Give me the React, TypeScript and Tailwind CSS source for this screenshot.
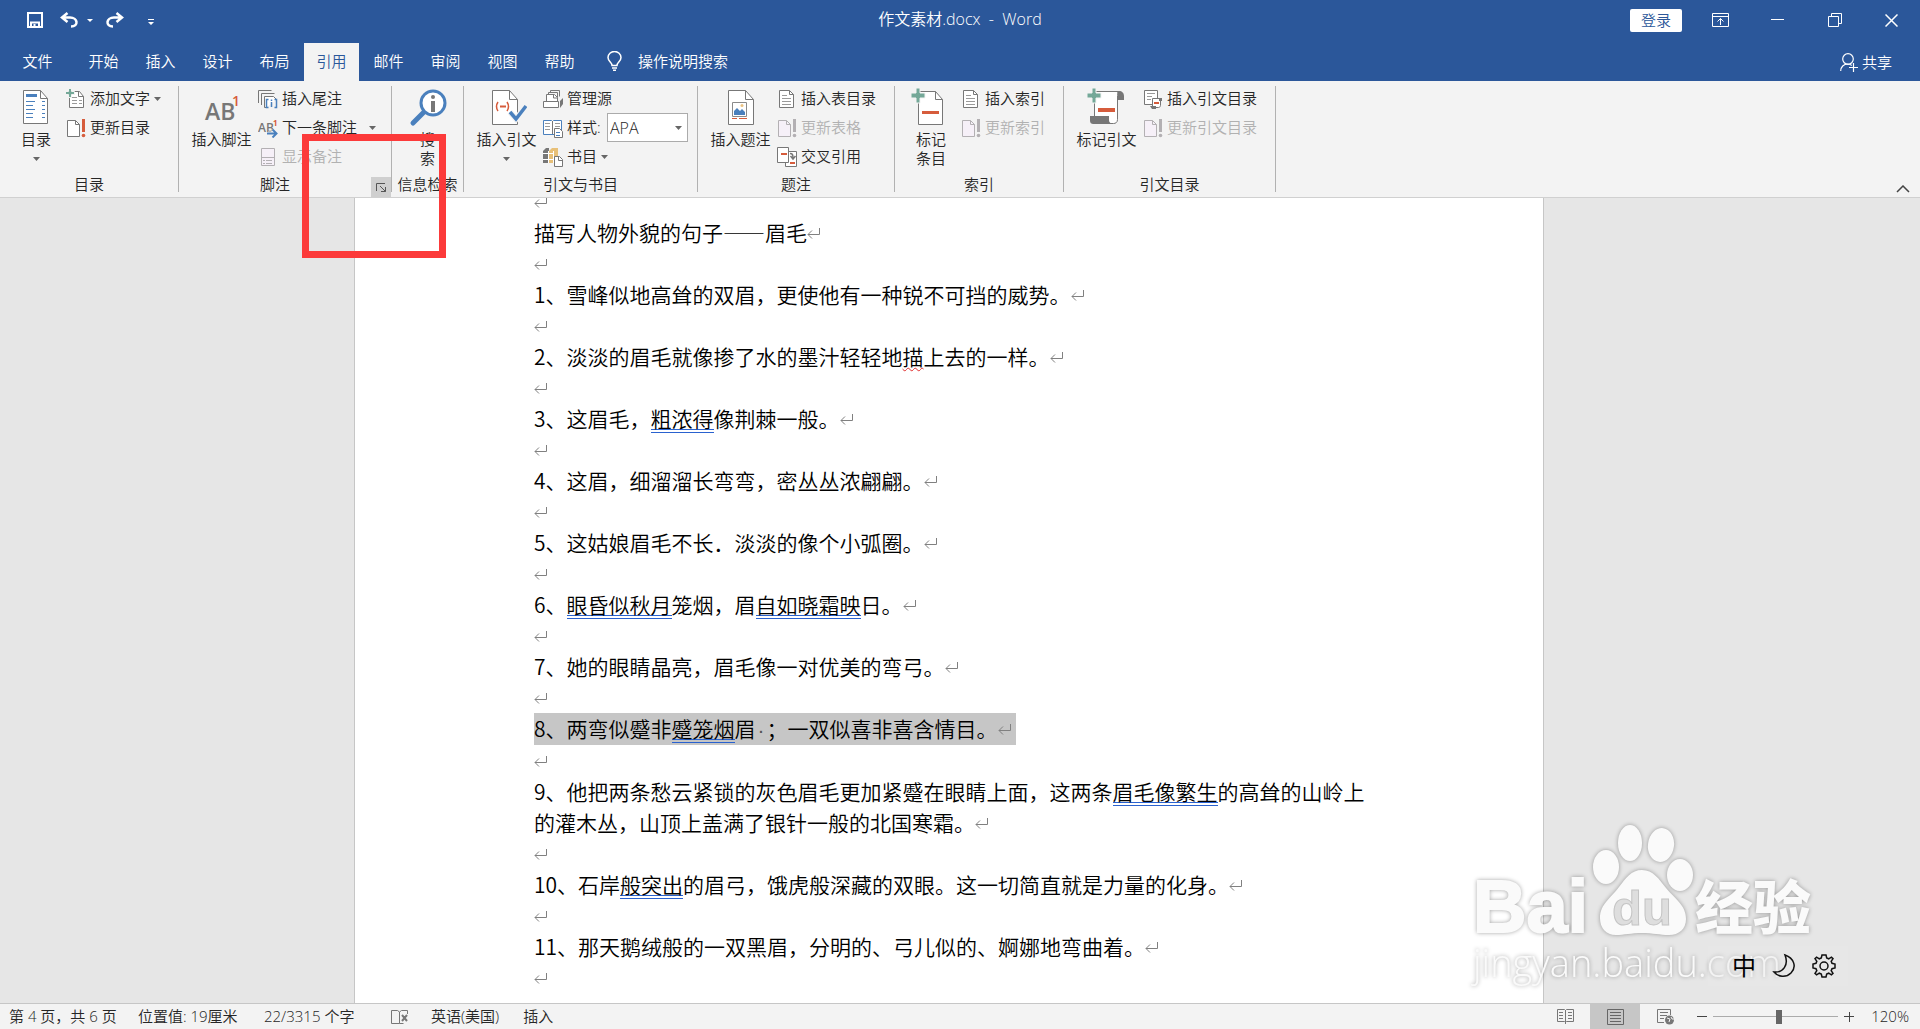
import type { ReactNode } from "react";

const GREY = "#777777";
const BLUE = "#4a80bd";
const ORANGE = "#d65c3c";
const TEAL = "#74a898";

/* ---------- icons ---------- */

function Big({ children }: { children: ReactNode }) {
  return (
    <svg width="40" height="40" viewBox="0 0 40 40" fill="none" className="mb-0.5 shrink-0">
      {children}
    </svg>
  );
}

function Small({ children }: { children: ReactNode }) {
  return (
    <svg width="20" height="20" viewBox="0 0 20 20" fill="none" className="shrink-0">
      {children}
    </svg>
  );
}

function Caret() {
  return (
    <svg width="7" height="4" viewBox="0 0 7 4" className="shrink-0">
      <path d="M0 0h7L3.500 4z" fill="#666" />
    </svg>
  );
}

function TocIcon() {
  return (
    <Big>
      <path d="M7.500 2.500h17l7 8v25h-24z" fill="#fff" stroke={GREY} />
      <path d="M24.500 2.500v8h7" stroke={GREY} />
      <path d="M10 6h11v3H10z" fill={BLUE} />
      <path d="M10 13.500h9M10 17.500h7M10 21.500h9M10 25.500h7M10 29.500h7M26 13.500h3M26 17.500h3M26 21.500h3M26 25.500h3M26 29.500h3" stroke={BLUE} />
    </Big>
  );
}

function FootnoteIcon() {
  return (
    <Big>
      <text x="3" y="32" fontSize="23" fontWeight="600" fontFamily="Open Sans, sans-serif" fill={GREY}>AB</text>
      <text x="30" y="18" fontSize="14" fontWeight="600" fontFamily="Open Sans, sans-serif" fill={ORANGE}>1</text>
    </Big>
  );
}

function SearchIcon() {
  return (
    <Big>
      <path d="M17 23 5 35" stroke={BLUE} strokeWidth="5" strokeLinecap="round" />
      <circle cx="25" cy="15" r="12" fill="#fff" stroke={BLUE} strokeWidth="3" />
      <circle cx="25" cy="9" r="2" fill={GREY} />
      <path d="M23 13h4v11h-4z" fill={GREY} />
    </Big>
  );
}

function CitationIcon() {
  return (
    <Big>
      <path d="M5.500 2.500h17l8 9v25h-25z" fill="#fff" stroke={GREY} />
      <path d="M22.500 2.500v9h8" stroke={GREY} />
      <path d="M11 14c-2 3-2 6 0 9M20 14c2 3 2 6 0 9" stroke={ORANGE} strokeWidth="1.500" />
      <path d="M13 18.500h6" stroke={ORANGE} strokeWidth="2" />
      <path d="m23 24 6 7 10-13" stroke="#f3f3f3" strokeWidth="6" />
      <path d="m23 24 6 7 10-13" stroke={BLUE} strokeWidth="3.500" />
    </Big>
  );
}

function CaptionIcon() {
  return (
    <Big>
      <path d="M7.500 2.500h17l8 9v25h-25z" fill="#fff" stroke={GREY} />
      <path d="M24.500 2.500v9h8" stroke={GREY} />
      <path d="M11.500 14.500h14v14h-14z" stroke="#8a8a8a" />
      <path d="M13 27v-4l3-3 3 3 2-2 3 3v3z" fill={BLUE} />
      <circle cx="21" cy="17.500" r="1.500" fill="#eac282" />
      <path d="M11 30.500h5M18 30.500h8" stroke={ORANGE} />
    </Big>
  );
}

function MarkEntryIcon() {
  return (
    <Big>
      <path d="M7.500 3.500h17l7 8v25h-24z" fill="#fff" stroke={GREY} />
      <path d="M24.500 3.500v8h7" stroke={GREY} />
      <path d="M11 23h17v3H11z" fill={ORANGE} />
      <path d="M5 0h4v5h5v5H9v5H5v-5H0V5h5z" fill={TEAL} stroke="#f3f3f3" />
    </Big>
  );
}

function MarkCitationIcon() {
  return (
    <Big>
      <path d="M7.500 3.500h25c-1.500 1-2 2-2 4v24c0 3-2 4-4 4h-15l-4-4z" fill="#fff" stroke={GREY} />
      <path d="M31 3h1c3 0 5 2 5 5v4h-6V8c0-2 0-3-1.500-4.500z" fill={GREY} />
      <path d="M3 28h19v4c0 2 1 3.500 4 4H7c-3 0-4-1-4-4z" fill={GREY} />
      <path d="M11 20h17v4H11z" fill={ORANGE} />
      <path d="M5 0h4v5h5v5H9v5H5v-5H0V5h5z" fill={TEAL} stroke="#f3f3f3" />
    </Big>
  );
}

function AddTextIcon() {
  return (
    <Small>
      <path d="M3.500 2.500h10l4 5v11h-14z" fill="#fff" stroke={GREY} />
      <path d="M12.500 2.500v5h5" stroke={GREY} />
      <path d="M6 8.500h5M6 11.500h5M6 14.500h5M13 11.500h3M13 14.500h3" stroke="#9a9a9a" />
      <path d="M2.500-.5h3v3h3v3h-3v3h-3v-3h-3v-3h3z" fill={TEAL} stroke="#f3f3f3" />
    </Small>
  );
}

function UpdateIcon({ disabled }: { disabled?: boolean }) {
  const line = disabled ? "#b3b0b3" : GREY;
  const mark = disabled ? "#b3b0b3" : ORANGE;
  return (
    <Small>
      <path d="M1.500 2.500h8l4 4v12h-12z" fill={disabled ? "#f6f0f8" : "#fff"} stroke={line} />
      <path d="M9.500 2.500v4h4" stroke={line} />
      <path d="M16 1h3v13h-3z" fill={mark} />
      <circle cx="17.500" cy="17.500" r="1.800" fill={mark} />
    </Small>
  );
}

function EndnoteIcon() {
  return (
    <Small>
      <path d="M.5 14V1.500h13M3.500 16V4.500h13" stroke={GREY} />
      <path d="M8 18.500H6.500v-11h9l3 3" fill="#fff" stroke={GREY} />
      <path d="M10.500 10.500h-2v8h2M16.500 10.500h2v8h-2" stroke={BLUE} strokeWidth="1.500" />
      <path d="M13.500 13v5M13.500 10.500v1.500" stroke={BLUE} strokeWidth="1.500" />
    </Small>
  );
}

function NextFootnoteIcon() {
  return (
    <Small>
      <text x="0" y="14" fontSize="12" fontWeight="600" fontFamily="Open Sans, sans-serif" fill={GREY}>AB</text>
      <text x="15" y="8" fontSize="8" fontWeight="700" fontFamily="Open Sans, sans-serif" fill={ORANGE}>1</text>
      <path d="M10 15.500h8M14.500 11.500l4 4-4 4" stroke="#f3f3f3" strokeWidth="4" />
      <path d="M9 15.500h9M14.500 11.500l4 4-4 4" stroke={BLUE} strokeWidth="2" />
    </Small>
  );
}

function ShowNotesIcon() {
  return (
    <Small>
      <path d="M3.500 1.500h13v17h-13zM3.500 10.500h13" fill="#f6f0f8" stroke="#b3b0b3" />
      <path d="M5 13.500h2M8 13.500h6M5 16.500h2M8 16.500h6" stroke="#b3b0b3" />
    </Small>
  );
}

function SourcesIcon() {
  return (
    <Small>
      <path d="M5.500 5V3.500h9v5M7.500 3V1.500h9v6" stroke={GREY} />
      <path d="M3.500 12V5.500h8l3 3v4" fill="#fff" stroke={GREY} />
      <path d="M10.500 6v3h4" stroke={GREY} />
      <path d="M.5 12.500h15v6H.5z" fill="#fff" stroke={GREY} />
      <path d="m17 12 3-3v6l-3 4z" fill={GREY} />
    </Small>
  );
}

function StyleIcon() {
  return (
    <Small>
      <path d="M.5 2.500h8l1 1 1-1h8v14H.5z" fill="#fff" stroke={BLUE} />
      <path d="M9.500 3v13" stroke={GREY} />
      <path d="M2 5.500h5M2 8.500h5M2 11.500h5M12 5.500h5M12 8.500h5" stroke="#9a9a9a" />
      <path d="M11.500 10.500h5l3 3v6h-8z" fill="#fff" stroke={GREY} />
      <path d="M13 14.500h4M13 17.500h4" stroke={BLUE} />
    </Small>
  );
}

function BibliographyIcon() {
  return (
    <Small>
      <path d="m0 4 3-3h3v12l-1 3H0z" fill={GREY} />
      <path d="m6 4 3-3h6v12l-2 3H6z" fill="#e8c078" />
      <path d="M0 6.500h5M0 12.500h5M6 6.500h5M6 12.500h5M5.500 4v12M10.500 4v12" stroke="#fff" />
      <path d="M11.500 9.500h5l3 3v7h-8z" fill="#fff" stroke={GREY} />
      <path d="M15.500 9.500v4h4" stroke={GREY} />
    </Small>
  );
}

function PageIcon() {
  return (
    <Small>
      <path d="M2.500 1.500h10l4 4v13h-14z" fill="#fff" stroke={GREY} />
      <path d="M12.500 1.500v4h4" stroke={GREY} />
      <path d="M5 6.500h5M5 9.500h9M5 12.500h9M5 15.500h9" stroke="#9a9a9a" />
    </Small>
  );
}

function CrossRefIcon() {
  return (
    <Small>
      <path d="M8.500 4.500h11v15h-11z" fill="#fff" stroke={GREY} />
      <path d="M.5.5h11v15H.5z" fill="#fff" stroke={GREY} />
      <path d="M4 7h6M13 16h5" stroke={ORANGE} strokeWidth="2" />
      <path d="M13 6.500c2.500 0 3 1 3 5M13.500 9l2.500 3 2.500-3" stroke={GREY} strokeWidth="1.500" />
    </Small>
  );
}

function AuthoritiesIcon() {
  return (
    <Small>
      <path d="M1.500 1.500h13v14h-13z" fill="#fff" stroke={GREY} />
      <path d="M4 4.500h8M4 7.500h5M4 10.500h4" stroke="#9a9a9a" />
      <path d="M9.500 9.500h8v7c0 1-1 2-2 2h-6z" fill="#fff" stroke={GREY} />
      <path d="M16 9h3v3h-3zM7 17h6v3H9z" fill={GREY} />
      <path d="M11 13h5v2h-5z" fill={ORANGE} />
    </Small>
  );
}

/* ---------- ribbon parts ---------- */

function Group({ label, className, launcher, children }: { label: string; className: string; launcher?: boolean; children: ReactNode }) {
  return (
    <section aria-label={label} className={`flex shrink-0 ${className}`}>
      <div className="flex min-w-0 flex-1 flex-col pt-[3px]">
        <div className="flex h-[87px]">{children}</div>
        <div className="flex flex-1 items-center">
          <span className="flex-1 text-center">{label}</span>
          {launcher && (
            <button aria-label="脚注和尾注" className="flex h-5 w-5 items-center justify-center self-end bg-[#cfcfcf]">
              <svg width="11" height="11" viewBox="0 0 11 11" fill="none" stroke="#555">
                <path d="M.5 9V1.500H9M4 4l5.500 5.500M9.500 5v4.500H5" />
              </svg>
            </button>
          )}
        </div>
      </div>
      <div className="my-[5px] w-px bg-[#b1b1b1]" />
    </section>
  );
}

function BigButton({ icon, lines, className, caret }: { icon: ReactNode; lines: string[]; className: string; caret?: boolean }) {
  return (
    <button className={`flex flex-col items-center pt-1 leading-[19px] whitespace-nowrap ${className}`}>
      {icon}
      {lines.map((line) => (
        <span key={line}>{line}</span>
      ))}
      {caret && (
        <span className="flex h-[19px] items-center">
          <Caret />
        </span>
      )}
    </button>
  );
}

function SmallButton({ icon, label, disabled, caret, wide }: { icon: ReactNode; label: string; disabled?: boolean; caret?: boolean; wide?: boolean }) {
  return (
    <button disabled={disabled} className="flex h-[29px] items-center gap-1 whitespace-nowrap disabled:text-[#b1b1b1]">
      {icon}
      <span className="pb-0.5">{label}</span>
      {caret && (
        <span className={wide ? "pl-2" : ""}>
          <Caret />
        </span>
      )}
    </button>
  );
}

/* ---------- document parts ---------- */

function Mark() {
  return (
    <svg width="18" height="14" viewBox="0 0 18 14" fill="none" stroke="#808080" className="inline-block align-baseline">
      <path d="M12.500 1v6.500H1M5 3.500l-4 4 4 4" />
    </svg>
  );
}

function Grammar({ children }: { children: ReactNode }) {
  return <span className="inline-block border-b-4 border-double border-[#2a62cf] leading-none">{children}</span>;
}

function Spelling({ children }: { children: ReactNode }) {
  return <span className="underline decoration-[#e03030] decoration-wavy decoration-1 underline-offset-2">{children}</span>;
}

const paragraphs: ReactNode[] = [
  "描写人物外貌的句子——眉毛",
  "1、雪峰似地高耸的双眉，更使他有一种锐不可挡的威势。",
  <>2、淡淡的眉毛就像掺了水的墨汁轻轻地<Spelling>描</Spelling>上去的一样。</>,
  <>3、这眉毛，<Grammar>粗浓得</Grammar>像荆棘一般。</>,
  "4、这眉，细溜溜长弯弯，密丛丛浓翩翩。",
  "5、这姑娘眉毛不长．淡淡的像个小弧圈。",
  <>6、<Grammar>眼昏似秋月</Grammar>笼烟，眉<Grammar>自如晓霜映</Grammar>日。</>,
  "7、她的眼睛晶亮，眉毛像一对优美的弯弓。",
  <mark className="inline-block bg-[#c6c6c6] text-black">
    8、两弯似蹙非<Grammar>蹙笼烟</Grammar>眉<span className="px-0.5 font-['Liberation_Sans'] text-[#555]">·</span>；一双似喜非喜含情目。<Mark />
  </mark>,
  <>9、他把两条愁云紧锁的灰色眉毛更加紧蹙在眼睛上面，这两条<Grammar>眉毛像繁生</Grammar>的高耸的山岭上的灌木丛，山顶上盖满了银针一般的北国寒霜。</>,
  <>10、石岸<Grammar>般突出</Grammar>的眉弓，饿虎般深藏的双眼。这一切简直就是力量的化身。</>,
  "11、那天鹅绒般的一双黑眉，分明的、弓儿似的、婀娜地弯曲着。",
];

const SELECTED = 8;

function Watermark() {
  return (
    <svg
      aria-hidden="true"
      width="390"
      height="180"
      viewBox="0 0 390 180"
      className="pointer-events-none absolute right-[69px] bottom-[34px] drop-shadow-[0_0_2px_rgba(0,0,0,0.35)]"
    >
      <g fill="#fafafa">
        <ellipse cx="145" cy="52" rx="13" ry="17" />
        <ellipse cx="169" cy="28" rx="12" ry="18" />
        <ellipse cx="200" cy="30" rx="13" ry="17" transform="rotate(8 200 30)" />
        <ellipse cx="219" cy="60" rx="13" ry="16" />
        <path d="M181 55c11 0 17 9 24 18 9 11 20 17 20 31 0 10-7 16-17 16-9 0-16-2-27-2s-18 2-26 2c-10 0-16-7-16-17 0-14 11-20 19-31 7-9 12-17 23-17z" />
        <text x="12" y="117" fontSize="74" fontWeight="700" fontFamily="Liberation Sans, sans-serif" stroke="#fafafa" strokeWidth="2">Bai</text>
        <text x="234" y="114" fontSize="58" fontWeight="900" fontFamily="Noto Sans CJK SC, sans-serif">经验</text>
        <text x="12" y="162" fontSize="38" fontFamily="Open Sans, sans-serif">jingyan.baidu.com</text>
      </g>
      <text x="151" y="110" fontSize="49" fontWeight="700" fontFamily="Liberation Sans, sans-serif" fill="#dedede" stroke="#c4c4c4">du</text>
    </svg>
  );
}

function ImeBar() {
  return (
    <div className="absolute right-[72px] bottom-[43px] flex h-10 w-[140px] items-center justify-end gap-4 bg-[#e9e9e9]/40 pr-3 text-black">
      <span className="text-2xl leading-none font-normal">中</span>
      <svg width="24" height="26" viewBox="0 0 24 26" fill="none" stroke="#111" strokeWidth="1.500">
        <path d="M13 2c9 3 12 12 6 18-5 5-13 4-17-1 9 1 15-7 11-17z" />
      </svg>
      <svg width="24" height="26" viewBox="-12 -13 24 26" fill="none" stroke="#111" strokeWidth="1.500">
        <circle r="4" />
        <path d="M-2-11h4l.7 3 2 .8L7.400-8.900 9-7.300 7.200-4.700l.8 2 3 .7v4l-3 .7-.8 2L9 7.300 7.400 8.900 4.700 7.200l-2 .8-.7 3h-4l-.7-3-2-.8-2.700 1.700L-9 7.300l1.800-2.600-.8-2-3-.7v-4l3-.7.8-2L-9-7.300l1.600-1.600 2.700 1.700 2-.8z" />
      </svg>
    </div>
  );
}

const tabs = ["开始", "插入", "设计", "布局", "引用", "邮件", "审阅", "视图", "帮助"];

export default function App() {
  return (
    <div lang="zh-CN" className="relative flex h-screen flex-col overflow-hidden bg-[#e6e6e6] font-['Open_Sans','Noto_Sans_CJK_SC',sans-serif] text-[15px] leading-5 font-[350] text-[#262626]">
      <header className="bg-[#2b579a] text-white">
        <div className="flex h-[43px] items-start">
          <div className="flex h-10 flex-1 items-center">
            <button aria-label="保存" className="mr-[17px] ml-[27px]">
              <svg width="16" height="16" viewBox="0 0 16 16" fill="none" stroke="#fff">
                <path d="M1 1h14v14H1z" strokeWidth="2" />
                <path d="M4 15v-4.500h8V15" strokeWidth="2" />
                <path d="M7.500 12v3" strokeWidth="2" />
              </svg>
            </button>
            <button aria-label="撤消" className="mr-2">
              <svg width="19" height="16" viewBox="0 0 19 16" fill="none" stroke="#fff" strokeWidth="2.500">
                <path d="M2 5.500h8c8 0 9 9 1 9M7.500 1 2 5.500 7.500 10" />
              </svg>
            </button>
            <button aria-label="撤消选项" className="mr-3">
              <svg width="6" height="3" viewBox="0 0 6 3"><path d="M0 0h6L3 3z" fill="#fff" /></svg>
            </button>
            <button aria-label="重复" className="mr-6">
              <svg width="19" height="16" viewBox="0 0 19 16" fill="none" stroke="#fff" strokeWidth="2.500">
                <path d="M17 5.500H9c-8 0-9 9-1 9M11.500 1 17 5.500 11.500 10" />
              </svg>
            </button>
            <button aria-label="自定义快速访问工具栏" className="mt-1">
              <svg width="6" height="6" viewBox="0 0 6 6"><path d="M0 0h6v1H0zM0 3h6L3 6z" fill="#fff" /></svg>
            </button>
          </div>
          <h1 className="flex h-10 items-center pb-0.5 text-base font-[350] whitespace-pre">作文素材.docx  -  Word</h1>
          <div className="flex h-10 flex-1 items-center justify-end">
            <button className="mr-2.5 h-[23px] w-[52px] rounded-xs bg-white text-[#2b579a]">登录</button>
            <button aria-label="功能区显示选项" className="flex h-full w-[57px] items-center justify-center">
              <svg width="17" height="14" viewBox="0 0 17 14" fill="none" stroke="#fff">
                <path d="M.5.5h16v13H.5zM.5 3.500h16M8.500 12V5.500M5.500 8.500l3-3 3 3" />
              </svg>
            </button>
            <button aria-label="最小化" className="flex h-full w-[57px] items-center justify-center">
              <svg width="13" height="14" viewBox="0 0 13 14"><path d="M0 6h13v1H0z" fill="#fff" /></svg>
            </button>
            <button aria-label="向下还原" className="flex h-full w-[57px] items-center justify-center">
              <svg width="14" height="14" viewBox="0 0 14 14" fill="none" stroke="#fff">
                <path d="M.5 3.500h10v10H.5zM3.500 3V.5h10v10H11" />
              </svg>
            </button>
            <button aria-label="关闭" className="flex h-full w-[57px] items-center justify-center">
              <svg width="13" height="13" viewBox="0 0 13 13" stroke="#fff" strokeWidth="1.500"><path d="m.5.5 12 12M12.500.5l-12 12" /></svg>
            </button>
          </div>
        </div>
        <nav className="flex h-[38px] items-stretch">
          <button className="w-[75px] pb-0.5">文件</button>
          {tabs.map((tab) => (
            <button key={tab} className={tab === "引用" ? "mx-px w-[55px] bg-[#f3f3f3] pb-0.5 text-[#2b579a]" : "w-[57px] pb-0.5"}>
              {tab}
            </button>
          ))}
          <button className="ml-[19px] flex items-center gap-4 pb-0.5">
            <svg width="15" height="20" viewBox="0 0 15 20" fill="none" stroke="#fff" strokeWidth="1.500">
              <path d="M5 14.500c0-3-4-4-4-8a6.500 6 0 0 1 13 0c0 4-4 5-4 8z" />
              <path d="M5 17h5M6 19.300h3" />
            </svg>
            操作说明搜索
          </button>
          <button className="mr-7 ml-auto flex items-center gap-1">
            <svg width="18" height="19" viewBox="0 0 18 19" fill="none" stroke="#fff" strokeWidth="1.200">
              <circle cx="8" cy="6" r="5.300" />
              <path d="M.7 18c0-4 3-7 7-7 2 0 3 .5 4 1.500M13.500 10v9M9 14.500h9" />
            </svg>
            共享
          </button>
        </nav>
      </header>

      <div className="flex h-[117px] shrink-0 border-b border-[#d0d0d0] bg-[#f3f3f3]">
        <Group label="目录" className="w-[179px]">
          <BigButton className="ml-1.5 w-15" icon={<TocIcon />} lines={["目录"]} caret />
          <div>
            <SmallButton icon={<AddTextIcon />} label="添加文字" caret />
            <SmallButton icon={<UpdateIcon />} label="更新目录" />
          </div>
        </Group>
        <Group label="脚注" className="w-[213px]" launcher>
          <BigButton className="ml-1.5 w-[73px]" icon={<FootnoteIcon />} lines={["插入脚注"]} />
          <div>
            <SmallButton icon={<EndnoteIcon />} label="插入尾注" />
            <SmallButton icon={<NextFootnoteIcon />} label="下一条脚注" caret wide />
            <SmallButton icon={<ShowNotesIcon />} label="显示备注" disabled />
          </div>
        </Group>
        <Group label="信息检索" className="w-[72px]">
          <BigButton className="w-full" icon={<SearchIcon />} lines={["搜", "索"]} />
        </Group>
        <Group label="引文与书目" className="w-[234px]">
          <BigButton className="ml-1.5 w-[73px]" icon={<CitationIcon />} lines={["插入引文"]} caret />
          <div>
            <SmallButton icon={<SourcesIcon />} label="管理源" />
            <div className="flex h-[29px] items-center gap-1">
              <StyleIcon />
              <label htmlFor="citation-style" className="w-9 pb-0.5 whitespace-nowrap">样式:</label>
              <div className="relative flex items-center">
                <select id="citation-style" className="h-[29px] w-[81px] appearance-none border border-[#ababab] bg-white pl-0.5 text-base">
                  <option>APA</option>
                </select>
                <span className="pointer-events-none absolute right-1.5">
                  <Caret />
                </span>
              </div>
            </div>
            <SmallButton icon={<BibliographyIcon />} label="书目" caret />
          </div>
        </Group>
        <Group label="题注" className="w-[197px]">
          <BigButton className="ml-1.5 w-[73px]" icon={<CaptionIcon />} lines={["插入题注"]} />
          <div>
            <SmallButton icon={<PageIcon />} label="插入表目录" />
            <SmallButton icon={<UpdateIcon disabled />} label="更新表格" disabled />
            <SmallButton icon={<CrossRefIcon />} label="交叉引用" />
          </div>
        </Group>
        <Group label="索引" className="w-[169px]">
          <BigButton className="ml-1.5 w-15" icon={<MarkEntryIcon />} lines={["标记", "条目"]} />
          <div>
            <SmallButton icon={<PageIcon />} label="插入索引" />
            <SmallButton icon={<UpdateIcon disabled />} label="更新索引" disabled />
          </div>
        </Group>
        <Group label="引文目录" className="w-[212px]">
          <BigButton className="ml-1.5 w-[73px]" icon={<MarkCitationIcon />} lines={["标记引文"]} />
          <div>
            <SmallButton icon={<AuthoritiesIcon />} label="插入引文目录" />
            <SmallButton icon={<UpdateIcon disabled />} label="更新引文目录" disabled />
          </div>
        </Group>
        <button aria-label="折叠功能区" className="mr-2.5 mb-1 ml-auto self-end">
          <svg width="14" height="8" viewBox="0 0 14 8" fill="none" stroke="#444" strokeWidth="1.500"><path d="m1 7 6-6 6 6" /></svg>
        </button>
      </div>

      <main className="flex min-h-0 flex-1 justify-center overflow-hidden pr-[22px]">
        <article className="w-[1190px] border-x border-[#c6c6c6] bg-white pr-[172px] pl-[179px] font-['Noto_Sans_CJK_SC',sans-serif] text-[21px] leading-[31px] text-black">
          <div className="-mt-3">
            <p><Mark /></p>
            {paragraphs.map((text, i) => (
              <div key={i}>
                <p>
                  {text}
                  {i !== SELECTED && <Mark />}
                </p>
                <p><Mark /></p>
              </div>
            ))}
          </div>
        </article>
      </main>

      <footer className="flex h-[26px] shrink-0 items-center border-t border-[#c6c6c6] bg-[#f3f3f3] pl-[9px] whitespace-nowrap">
        <span className="w-[129px] pb-0.5">第 4 页，共 6 页</span>
        <span className="w-[126px] pb-0.5">位置值: 19厘米</span>
        <span className="w-[127px] pb-0.5">22/3315 个字</span>
        <button aria-label="校对" className="mr-[22px]">
          <svg width="18" height="16" viewBox="0 0 18 16" fill="none" stroke="#777">
            <path d="M8.500 14.500H.5V1.500h6l2 1.500zM8.500 3l2-1.500h6V5M8.500 14.500h4" />
            <path d="m11 6 5 6M16 6l-5 6" strokeWidth="2" />
          </svg>
        </button>
        <button className="mr-6 pb-0.5">英语(美国)</button>
        <button className="pb-0.5">插入</button>
        <div className="ml-auto flex h-full items-center">
          <button aria-label="阅读视图" className="flex h-full w-[50px] items-center justify-center">
            <svg width="17" height="15" viewBox="0 0 17 15" fill="none" stroke="#777">
              <path d="M.5.5h7l1 1 1-1h7v12h-7l-1 1-1-1h-7zM8.500 1v14M2 3.500h4M2 6.500h4M2 9.500h4M11 3.500h4M11 6.500h4M11 9.500h4" />
            </svg>
          </button>
          <button aria-label="页面视图" className="flex h-full w-[50px] items-center justify-center bg-[#c6c6c6]">
            <svg width="17" height="16" viewBox="0 0 17 16" fill="none" stroke="#666">
              <path d="M.5.5h16v15H.5zM3 3.500h11M3 6.500h11M3 9.500h11M3 12.500h11" />
            </svg>
          </button>
          <button aria-label="Web 版式视图" className="flex h-full w-[50px] items-center justify-center">
            <svg width="17" height="16" viewBox="0 0 17 16" fill="none" stroke="#777">
              <path d="M7 13.500H.5V.5h13V6M3 3.500h8M3 6.500h7M3 9.500h4" />
              <circle cx="12.500" cy="11" r="4.500" fill="#777" stroke="none" />
              <path d="m10 9 3 1-1 3M14 8l1 2 2 0" stroke="#f3f3f3" />
            </svg>
          </button>
          <button aria-label="缩小" className="mr-1.5 ml-[7px]">
            <svg width="10" height="10" viewBox="0 0 10 10"><path d="M0 4h10v1H0z" fill="#444" /></svg>
          </button>
          <input
            type="range"
            aria-label="缩放"
            min={0}
            max={100}
            defaultValue={53}
            className="h-4 w-[125px] appearance-none bg-[linear-gradient(#ababab,#ababab)] bg-[length:100%_1px] bg-center bg-no-repeat [&::-webkit-slider-thumb]:h-3.5 [&::-webkit-slider-thumb]:w-1.5 [&::-webkit-slider-thumb]:appearance-none [&::-webkit-slider-thumb]:bg-[#666]"
          />
          <button aria-label="放大" className="ml-1.5">
            <svg width="10" height="10" viewBox="0 0 10 10" stroke="#444"><path d="M0 4.500h10M5.500 0v10" /></svg>
          </button>
          <button className="w-[66px] pr-[11px] pb-0.5 text-right">120%</button>
        </div>
      </footer>

      <Watermark />
      <ImeBar />
      <div className="pointer-events-none absolute top-[134px] left-[302px] h-[124px] w-36 border-[7px] border-[#fc3a3a]" />
    </div>
  );
}
